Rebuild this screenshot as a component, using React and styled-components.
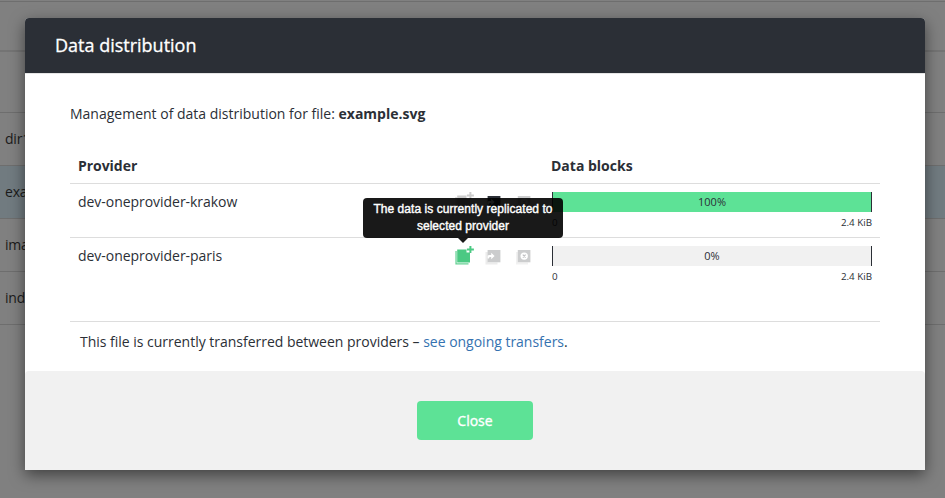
import React from 'react';
import styled, { createGlobalStyle, css } from 'styled-components';

const GlobalStyle = createGlobalStyle`
  * { box-sizing: border-box; }
  body {
    margin: 0;
    overflow: hidden;
    background: #808080;
    color: #2b2f36;
    font: 14px/20px "Open Sans", sans-serif;
  }
`;

const Page = styled.div`
  display: grid;
  width: 945px;
  height: 498px;
  overflow: hidden;
  & > * { grid-area: 1 / 1; }
`;

const FileList = styled.div`
  display: flex;
  flex-direction: column;
  padding-top: 1px;
`;

const ListHeader = styled.div`
  height: 51px;
  border-top: 1px solid #6e6e6e;
  border-bottom: 2px solid #747474;
`;

const FileRow = styled.div`
  display: flex;
  align-items: center;
  flex: none;
  height: ${(p) => p.$height || 53}px;
  padding-left: 5px;
  border-bottom: 1px solid #6e6e6e;
  background: ${(p) => (p.$selected ? '#717b80' : 'transparent')};
  color: #1b1b1b;
  letter-spacing: -0.2px;
`;

const Modal = styled.section`
  display: flex;
  flex-direction: column;
  z-index: 1;
  width: 900px;
  height: 452px;
  margin: 18px 0 0 25px;
  background: #fff;
  border-radius: 4px 4px 0 0;
  box-shadow: 0 5px 15px rgba(0, 0, 0, 0.5);
`;

const ModalHeader = styled.header`
  display: flex;
  align-items: center;
  height: 56px;
  padding: 0 30px 1px;
  background: #2b2f36;
  border-bottom: 1px solid #e5e5e5;
  border-radius: 4px 4px 0 0;
`;

const Title = styled.h1`
  margin: 0;
  color: #fff;
  font-size: 18px;
  font-weight: 400;
  line-height: 26px;
  -webkit-text-stroke: 0.3px #fff;
`;

const ModalBody = styled.div`
  flex: 1;
  padding: 30px 45px 0;
`;

const Intro = styled.p`
  margin: 0 0 25px;
`;

const Table = styled.div`
  display: flex;
  flex-direction: column;
  height: 173px;
  border-bottom: 1px solid #ddd;
`;

const columns = css`
  display: grid;
  grid-template-columns: 385px 97px 320px;
`;

const HeadRow = styled.div`
  ${columns}
  height: 35px;
  padding-top: 7px;
  border-bottom: 1px solid #ddd;
  font-weight: 700;
`;

const Row = styled.div`
  ${columns}
  height: 54px;
  border-bottom: 1px solid ${(p) => (p.$last ? 'transparent' : '#ddd')};
`;

const Cell = styled.div`
  padding-left: 8px;
  padding-top: ${(p) => p.$top || 0}px;
  letter-spacing: -0.04px;
`;

const HeadBlocks = styled.div`
  grid-column: 3;
  margin-left: -1px;
`;

const Actions = styled.div`
  display: flex;
  gap: 10px;
  padding-top: 8px;
  align-items: flex-start;
`;

const Action = styled.span`
  display: flex;
  position: relative;
  width: 20px;
  height: 20px;
`;

const Blocks = styled.div`
  padding-top: 8px;
`;

const Bar = styled.div`
  display: flex;
  align-items: center;
  justify-content: center;
  height: 20px;
  border: solid #2b2f36;
  border-width: 0 1px;
  background: ${(p) => (p.$full ? '#5de296' : '#f1f1f1')};
  font-size: 11px;
`;

const Scale = styled.div`
  display: flex;
  justify-content: space-between;
  padding-top: 4px;
  font-size: 9.8px;
  line-height: 14px;
`;

const Tooltip = styled.div`
  position: absolute;
  z-index: 2;
  left: 50%;
  bottom: 28px;
  width: 200px;
  height: 40px;
  margin-left: -102px;
  padding: 3px 8px;
  border-radius: 4px;
  background: rgba(0, 0, 0, 0.9);
  color: #fff;
  font: 12px/17px "Liberation Sans", Arial, sans-serif;
  letter-spacing: 0.05px;
  text-align: center;
  white-space: nowrap;
  -webkit-text-stroke: 0.4px #fff;

  &::after {
    content: '';
    position: absolute;
    top: 100%;
    left: 95px;
    border: 5px solid transparent;
    border-top-color: rgba(0, 0, 0, 0.9);
    border-bottom: 0;
  }
`;

const Notice = styled.p`
  margin: 10px 0 0 10px;
  letter-spacing: -0.015px;
`;

const Link = styled.a`
  color: #3572b0;
  text-decoration: none;
`;

const ModalFooter = styled.footer`
  display: flex;
  align-items: center;
  justify-content: center;
  height: 99px;
  background: #f1f1f1;
  border-radius: 4px 4px 0 0;
`;

const CloseButton = styled.button`
  width: 116px;
  height: 39px;
  padding: 0;
  border: 0;
  border-radius: 4px;
  background: #5de296;
  color: #fff;
  font: 14px/20px "Open Sans", sans-serif;
  -webkit-text-stroke: 0.35px #fff;
`;

const ReplicateIcon = ({ active }) => {
  const color = active ? '#4bc983' : '#cccccc';
  return (
    <svg width="20" height="20" viewBox="0 0 20 20">
      <path d="M0.4 5H1.7V17.2H13.5V18.5H0.4Z" fill={color} opacity="0.85" />
      <path d="M2.2 3.5H11.5V6.4H15V16.6H2.2Z" fill={color} />
      <path d="M15.4 0V7M11.9 3.5H18.9" stroke={color} strokeWidth="2" />
    </svg>
  );
};

const MigrateIcon = ({ active }) => (
  <svg width="20" height="20" viewBox="0 0 20 20">
    <path d="M0.5 6H3V16.5H12.5V18.5H0.5Z" fill="#ececec" />
    <rect x="2.6" y="4" width="12.8" height="12.3" fill={active ? '#2b2f36' : '#cbcccd'} />
    <path d="M2.6 12.5V9.7Q3 8.9 4.5 8.9H6.2V6.8L9.6 10L6.2 13.2V11H4.6L3.8 12.5Z" fill="#fff" />
  </svg>
);

const InvalidateIcon = () => (
  <svg width="20" height="20" viewBox="0 0 20 20">
    <path d="M1 6H3V16.5H13V18.5H1Z" fill="#f1f1f1" />
    <rect x="2.8" y="4" width="12.6" height="12.3" fill="#cccdce" />
    <circle cx="9.2" cy="10.1" r="3.7" fill="#fff" />
    <path d="M7.8 8.7L10.6 11.5M10.6 8.7L7.8 11.5" stroke="#bfc0c2" strokeWidth="1.2" />
  </svg>
);

const providers = [
  { name: 'dev-oneprovider-krakow', percent: 100, migrating: true },
  { name: 'dev-oneprovider-paris', percent: 0, replicating: true },
];

function ProviderRow({ provider, last }) {
  return (
    <Row $last={last}>
      <Cell $top={8}>{provider.name}</Cell>
      <Actions>
        <Action>
          <ReplicateIcon active={provider.replicating} />
          {provider.replicating && (
            <Tooltip>
              The data is currently replicated to<br />selected provider
            </Tooltip>
          )}
        </Action>
        <Action><MigrateIcon active={provider.migrating} /></Action>
        <Action><InvalidateIcon /></Action>
      </Actions>
      <Blocks>
        <Bar $full={provider.percent === 100}>{provider.percent}%</Bar>
        <Scale><span>0</span><span>2.4 KiB</span></Scale>
      </Blocks>
    </Row>
  );
}

export default function App() {
  return (
    <Page>
      <GlobalStyle />
      <FileList>
        <ListHeader />
        <FileRow $height={61} />
        <FileRow>dir1</FileRow>
        <FileRow $selected>example.svg</FileRow>
        <FileRow>image.png</FileRow>
        <FileRow>index.html</FileRow>
      </FileList>
      <Modal>
        <ModalHeader><Title>Data distribution</Title></ModalHeader>
        <ModalBody>
          <Intro>Management of data distribution for file: <b>example.svg</b></Intro>
          <Table>
            <HeadRow>
              <Cell>Provider</Cell>
              <HeadBlocks>Data blocks</HeadBlocks>
            </HeadRow>
            {providers.map((p, i) => (
              <ProviderRow key={p.name} provider={p} last={i === providers.length - 1} />
            ))}
          </Table>
          <Notice>
            This file is currently transferred between providers – <Link>see ongoing transfers</Link>.
          </Notice>
        </ModalBody>
        <ModalFooter><CloseButton>Close</CloseButton></ModalFooter>
      </Modal>
    </Page>
  );
}
